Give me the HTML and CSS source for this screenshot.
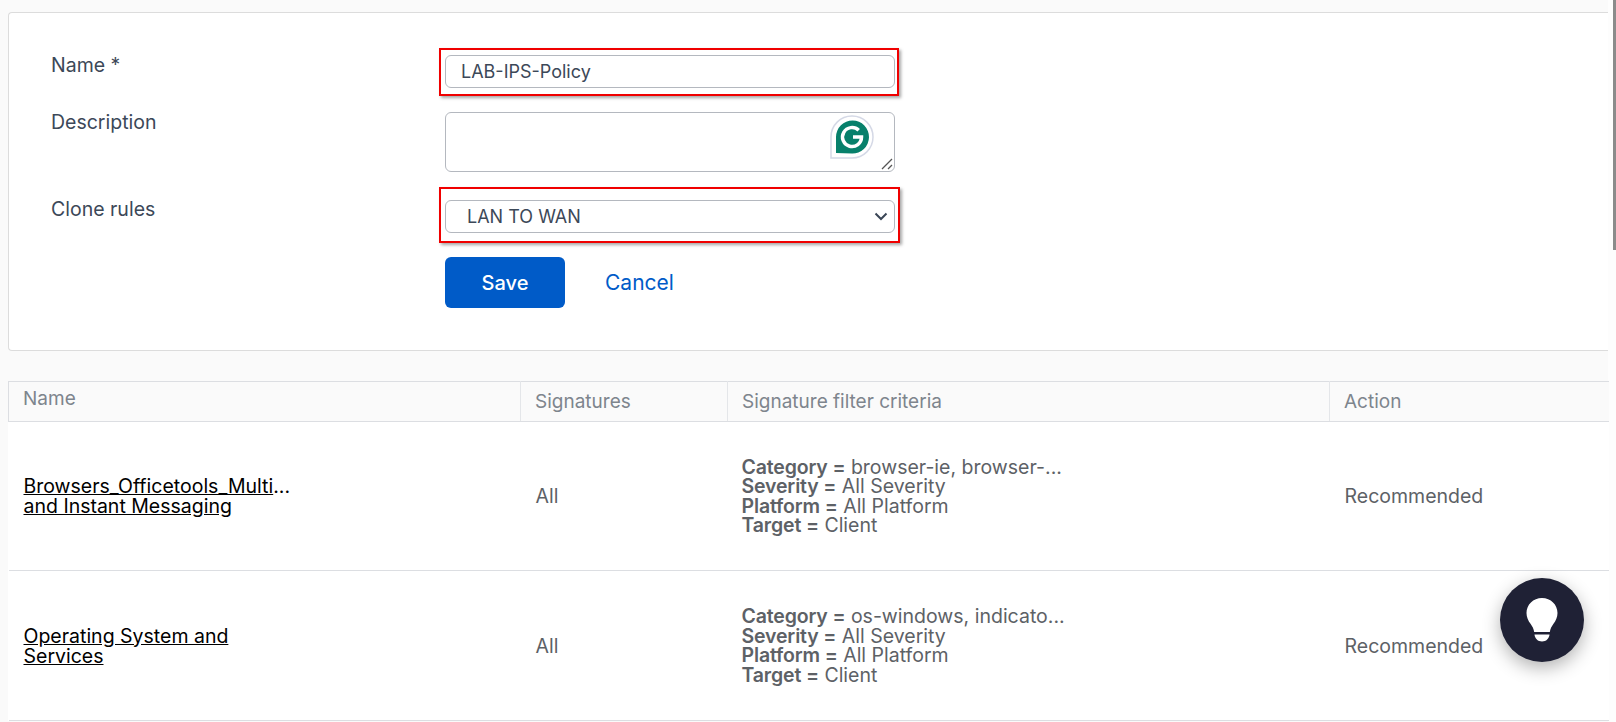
FILE: index.html
```html
<!DOCTYPE html>
<html>
	<head>
		<title>IPS Policy</title>
		<link rel="stylesheet" href="styles.css">
	</head>
	<body>
		<main class="page">
			<form class="card">
				<label class="label label-name">Name *</label>
				<div class="field field-name marked">
					<input class="control" type="text" value="LAB-IPS-Policy">
				</div>

				<label class="label label-desc">Description</label>
				<div class="field field-desc">
					<textarea class="control area"></textarea>
					<svg class="grammarly" width="44" height="44" viewBox="0 0 44 44">
						<path d="M1 43V22A21 21 0 1 1 22 43Z" fill="#fff" stroke="#d5d9e6" stroke-width="1.5"/>
						<path d="M6 38V22A16.500 16.500 0 1 1 22 38.500Z" fill="#07806b"/>
						<path d="M28.700 15.300A9.500 9.500 0 1 0 31.500 22H23" fill="none" stroke="#fff" stroke-width="3.500"/>
					</svg>
					<svg class="grip" width="12" height="12" viewBox="0 0 12 12">
						<path d="M1 11 11 1M7 11l4-4" stroke="#555" stroke-width="1.300" fill="none"/>
					</svg>
				</div>

				<label class="label label-clone">Clone rules</label>
				<div class="field field-clone marked">
					<div class="control select">
						<span>LAN TO WAN</span>
						<svg width="14" height="9" viewBox="0 0 14 9">
							<path d="M1.500 1.500 7 7l5.500-5.500" fill="none" stroke="#3a4656" stroke-width="2"/>
						</svg>
					</div>
				</div>

				<div class="actions">
					<button class="save" type="button">Save</button>
					<a class="cancel" href="#">Cancel</a>
				</div>
			</form>

			<table class="rules">
				<colgroup>
					<col class="col-name">
					<col class="col-sig">
					<col class="col-filter">
					<col class="col-action">
				</colgroup>
				<thead>
					<tr>
						<th class="th-name">Name</th>
						<th>Signatures</th>
						<th>Signature filter criteria</th>
						<th>Action</th>
					</tr>
				</thead>
				<tbody>
					<tr>
						<td><a class="rule-link" href="#"><u>Browsers_Officetools_Multi</u>...<br><u>and Instant Messaging</u></a></td>
						<td>All</td>
						<td class="criteria">
							<div><b>Category =</b> browser-ie, browser-...</div>
							<div><b>Severity =</b> All Severity</div>
							<div><b>Platform =</b> All Platform</div>
							<div><b>Target =</b> Client</div>
						</td>
						<td>Recommended</td>
					</tr>
					<tr>
						<td><a class="rule-link" href="#"><u>Operating System and</u><br><u>Services</u></a></td>
						<td>All</td>
						<td class="criteria">
							<div><b>Category =</b> os-windows, indicato...</div>
							<div><b>Severity =</b> All Severity</div>
							<div><b>Platform =</b> All Platform</div>
							<div><b>Target =</b> Client</div>
						</td>
						<td>Recommended</td>
					</tr>
				</tbody>
			</table>
		</main>

		<div class="scrollbar"></div>

		<button class="tips" type="button" aria-label="Tips">
			<svg width="32" height="44" viewBox="0 0 32 44">
				<path d="M16 0C7.200 0 .500 6.700.500 15c0 4.400 1.700 7.600 4 10.800 1.800 2.500 3.200 5 3.700 8.200h15.600c.5-3.200 1.900-5.700 3.700-8.200 2.300-3.200 4-6.400 4-10.800C31.500 6.700 24.800 0 16 0Z" fill="#fff"/>
				<path d="M8.500 36.500h15c-.4 4.200-3.400 7-7.500 7s-7.100-2.800-7.500-7Z" fill="#fff"/>
			</svg>
		</button>
	</body>
</html>
```

FILE: styles.css
```css
* {
	box-sizing: border-box;
}

html, body {
	margin: 0;
	height: 722px;
	overflow: hidden;
}

body {
	background: #fdfdfd;
	font-family: "Inter", sans-serif;
	font-size: 19.5px;
	color: #3c4858;
}

.page {
	width: 1608px;
	height: 722px;
	padding: 12px 0 0 8px;
	background: #fafafa;
}

/* form card */
.card {
	display: grid;
	grid-template-columns: 394px 450px;
	grid-template-rows: 57px 88px 57px 51px;
	height: 339px;
	padding: 42px 0 0 42px;
	background: #fff;
	border: 1px solid #dcdcdc;
	border-right: 0;
	border-radius: 4px 0 0 4px;
}

.label {
	grid-column: 1;
	line-height: 22px;
	margin-top: -1px;
}

.label-clone {
	margin-top: -2px;
}

.field {
	grid-column: 2;
	position: relative;
	height: 33px;
	font-size: 18px;
}

.field-desc {
	height: 60px;
}

/* the red annotation boxes from the screenshot */
.marked::after {
	content: "";
	position: absolute;
	top: -7px;
	left: -6px;
	right: -4px;
	bottom: -8px;
	border: 2px solid #f00000;
	box-shadow: 2px 2px 3px rgba(0, 0, 0, 0.35);
	pointer-events: none;
}

.field-clone.marked::after {
	top: -13px;
	bottom: -10px;
	right: -5px;
}

.control {
	display: block;
	width: 100%;
	height: 100%;
	padding: 0 15px;
	background: #fff;
	border: 1px solid #b4b8bf;
	border-radius: 6px;
	font: inherit;
	color: inherit;
	outline: none;
}

.area {
	resize: none;
}

.grammarly {
	position: absolute;
	top: 3px;
	right: 21px;
}

.grip {
	position: absolute;
	right: 2px;
	bottom: 2px;
}

.select {
	display: flex;
	align-items: center;
	justify-content: space-between;
	padding: 0 6px 0 21px;
}

.actions {
	grid-column: 2;
	display: flex;
	align-items: center;
	height: 51px;
	gap: 40px;
}

.save {
	width: 120px;
	height: 51px;
	background: #005bc8;
	border: 0;
	border-radius: 6px;
	font: inherit;
	font-size: 20px;
	font-weight: 500;
	color: #fff;
}

.cancel {
	font-size: 21px;
	color: #005bc8;
	text-decoration: none;
}

/* rules table */
.rules {
	width: 1600px;
	margin-top: 30px;
	border-collapse: collapse;
	table-layout: fixed;
	background: #fff;
	color: #5d6166;
}

.col-name { width: 512px; }
.col-sig { width: 207px; }
.col-filter { width: 602px; }
.col-action { width: 279px; }

.rules th {
	height: 40px;
	padding: 0 14px;
	background: #fafafa;
	border: 1px solid #dcdee2;
	border-right: 1px solid #e4e6e9;
	font-size: 19px;
	font-weight: 400;
	text-align: left;
	color: #7e858d;
}

.rules th:last-child {
	border-right: 0;
}

.rules th.th-name {
	padding-bottom: 6px;
}

.rules td {
	height: 149px;
	padding: 0 15px;
	border-bottom: 1px solid #dcdee2;
	line-height: 20px;
}

.rules tr:last-child td {
	height: 150px;
}

.rules td.criteria {
	padding: 1px 14px 0;
	line-height: 19.5px;
}

.rule-link {
	color: #000;
	text-decoration: none;
}

.rule-link u {
	color: #000;
}

.rules b {
	font-weight: 600;
	letter-spacing: -0.15px;
}

.scrollbar {
	position: fixed;
	top: 0;
	right: 0;
	width: 3px;
	height: 250px;
	background: #8b8b8b;
}

.tips {
	position: fixed;
	left: 1500px;
	top: 578px;
	display: flex;
	align-items: center;
	justify-content: center;
	width: 84px;
	height: 84px;
	padding: 0;
	background: #1f2135;
	border: 0;
	border-radius: 50%;
	box-shadow: 0 6px 18px rgba(0, 0, 0, 0.3);
}
```
